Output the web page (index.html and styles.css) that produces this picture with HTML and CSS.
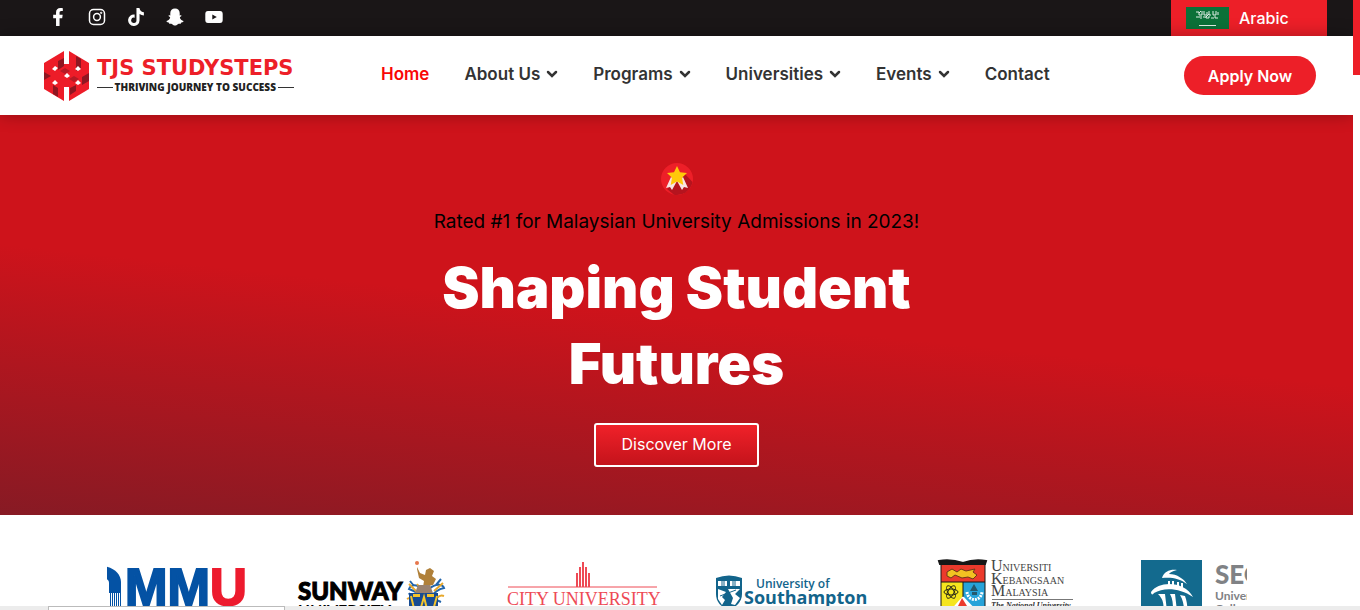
FILE: index.html
```html
<!DOCTYPE html>
<html lang="en">
    <head>
        <meta charset="UTF-8" />
        <meta name="viewport" content="width=device-width, initial-scale=1.0" />
        <title>TJS StudySteps</title>
        <link rel="stylesheet" href="styles.css">
    </head>
    <body>
        <div class="page">
            <!-- Top bar -->
            <div class="topbar">
                <div class="social">
                    <a href="#" aria-label="Facebook">
                        <svg viewBox="0 0 320 512"><path d="M279 288l14-93h-89v-60c0-25 12-50 52-50h41V7s-37-7-72-7c-73 0-121 44-121 125v70H23v93h81v224h100V288z" /></svg>
                    </a>
                    <a href="#" aria-label="Instagram">
                        <svg viewBox="0 0 18 18" class="outline"><rect x="1.5" y="1.5" width="15" height="15" rx="4" /><circle cx="9" cy="9" r="3.400" /><circle cx="13.200" cy="4.800" r=".4" /></svg>
                    </a>
                    <a href="#" aria-label="TikTok">
                        <svg viewBox="0 0 448 512"><path d="M448 210a210 210 0 0 1-123-39v179A163 163 0 1 1 185 188v90a75 75 0 1 0 52 71V0h88a121 121 0 0 0 2 22 122 122 0 0 0 54 80 121 121 0 0 0 67 20z" /></svg>
                    </a>
                    <a href="#" aria-label="Snapchat">
                        <svg viewBox="0 0 18 18"><path d="M9 .5c2.900 0 4.700 2 4.700 4.600v2.300c.8.100 1.600-.4 1.700.4.100.7-1.300 1-1.600 1.600.5 2 1.800 3 3.700 3.500.2 1.100-1.300 1.300-2.300 1.600-.3.400 0 1.200-.7 1.200-1-.1-1.900-.1-2.700.5-.9.700-1.700 1.300-2.800 1.300s-1.900-.6-2.800-1.300c-.8-.6-1.700-.6-2.700-.5-.7 0-.4-.8-.7-1.200-1-.3-2.500-.5-2.300-1.600 1.900-.5 3.200-1.500 3.700-3.500-.3-.6-1.700-.9-1.600-1.600.1-.8.900-.3 1.700-.4V5.100C4.300 2.500 6.100.5 9 .5z" /></svg>
                    </a>
                    <a href="#" aria-label="YouTube">
                        <svg viewBox="0 0 18 18"><path fill-rule="evenodd" d="M3 3h12q2.700 0 2.700 3v6q0 3-2.700 3H3Q.3 15 .3 12V6q0-3 2.700-3zm4.300 3.400v5.200L11.800 9z" /></svg>
                    </a>
                </div>
                <a href="#" class="language">
                    <svg class="flag" viewBox="0 0 43 22">
                        <rect width="43" height="22" fill="#0b7138" stroke="none" />
                        <path d="M10 5h3v3h3V4m2 0v4h3V5m2-1v4h2m2-4v4h3V4m2 1v3M10 10h4m1-1v3m2-2h3v1h3V9m2 2h3m1-2v2h3M13 6l2-2m5 6 3-3" />
                        <path d="M13 18.500h17" />
                    </svg>
                    <span>Arabic</span>
                </a>
            </div>

            <!-- Header -->
            <header class="header">
                <a href="#" class="brand">
                    <svg class="brand-mark" viewBox="0 0 46 50">
                        <path fill="#ed1c28" d="M0 12 20 0v50L0 38zM25 0l20 12v26L25 50z" />
                        <path fill="#ed1c28" d="M18 13h9v23h-9z" />
                        <path fill="#8f1722" d="m14 10 6-3v8l-6 4zM32 5l5 3v9l-5 3zM0 21l7 4-7 4zM9 34l5 3v9l-5-3zM26 37l6-3v6l-6 4zM38 26l7-4v8l-7 4z" />
                        <path fill="#b51a25" d="m16 20 5-3 5 3-5 3zM25 28l5-3 5 3-5 3z" />
                        <path fill="#fff" d="m11 15 3 2-3 3-3-2zM34 15l3 3-3 2-3-2zM23 22l3 3-3 2-3-2zM11 29l3 3-3 2-3-2zM34 29l3 3-3 2-3-2z" />
                    </svg>
                    <span class="brand-text">
                        <span class="brand-name">TJS STUDYSTEPS</span>
                        <span class="brand-tagline">THRIVING JOURNEY TO SUCCESS</span>
                    </span>
                </a>
                <nav class="nav">
                    <a href="#" class="active">Home</a>
                    <a href="#">About Us <svg class="chevron" viewBox="0 0 12 8"><path d="m2 2 4 4 4-4" /></svg></a>
                    <a href="#">Programs <svg class="chevron" viewBox="0 0 12 8"><path d="m2 2 4 4 4-4" /></svg></a>
                    <a href="#">Universities <svg class="chevron" viewBox="0 0 12 8"><path d="m2 2 4 4 4-4" /></svg></a>
                    <a href="#">Events <svg class="chevron" viewBox="0 0 12 8"><path d="m2 2 4 4 4-4" /></svg></a>
                    <a href="#">Contact</a>
                </nav>
                <button class="apply">Apply Now</button>
            </header>

            <!-- Hero -->
            <section class="hero">
                <svg class="badge" viewBox="0 0 32 32">
                    <circle cx="16" cy="16" r="16" fill="#ed1f28" />
                    <path fill="#b5141e" d="m23 10 8.500 9A16 16 0 0 1 13 31.700L6 26z" />
                    <path fill="#f8e4e2" d="m10 14 6 4-5 9-2-3-4 1zM22 14l-6 4 5 9 2-3 4 1z" />
                    <path fill="#ffc90a" d="m16 3 3 6.200 7 .8-5 4.800 1.300 7.200-6.300-3.500L9.700 22l1.300-7.200L6 10l7-.8z" />
                </svg>
                <p class="rated">Rated #1 for Malaysian University Admissions in 2023!</p>
                <h1>Shaping Student Futures</h1>
                <button class="discover">Discover More</button>
            </section>

            <!-- University logos -->
            <section class="partners">
                <div class="track">
                    <svg class="logo" viewBox="0 0 170 70">
                        <path fill="#0452a4" d="M24 11c13 0 21 8 21 16v11H33V28c0-4-3-5-9-5z" />
                        <path stroke="#0452a4" d="M34.500 38v20m2-20v20m2-20v20m2-20v20m2-20v20m2-20v20" />
                        <text x="49" y="50" class="mmu">MM<tspan class="mmu-u">U</tspan></text>
                    </svg>
                    <svg class="logo" viewBox="0 0 170 70">
                        <text x="11" y="45" class="sunway">SUNWAY</text>
                        <text x="11" y="61" class="sunway-sub">UNIVERSITY</text>
                        <g fill="none" stroke-width="2">
                            <path stroke="#2265ac" d="M137 34c-8-5-13-5-15 0 5 2 9 3 12 8m8-8c8-7 14-4 15-1-5 1-9 3-13 9m-18 4-4-8m25 6 7 3M123 26l4 5m27-7-5 6" />
                            <path stroke="#e7a82c" d="m122 29 9 9m-11 6c5-3 7 1 8 6m28-22-9 8m10 5c-6-2-9 4-9 8m-18-20 4 5" />
                        </g>
                        <path fill="#b08039" d="m130 12 3 6 5 2 1-5 4-2 4 3-2 5 4 3-3 6-10 2 1-6-5-3-2-9z" />
                        <circle cx="130" cy="8" r="2" fill="#e7774c" />
                        <path fill="#99816f" d="M131 30h12l3 8-9 3-9-3z" />
                        <path fill="#174b92" d="M122 38h29v12c0 11-7 16-15 18-8-2-14-7-14-18z" />
                        <path fill="none" stroke="#f5c42b" stroke-width="2" d="m124 41 6 25 7-24 6 24 7-25" />
                        <path fill="#f5c42b" d="M126 39h7v3h-7zM140 39h7v3h-7z" />
                    </svg>
                    <svg class="logo" viewBox="0 0 170 70">
                        <path stroke="#ee4a55" stroke-width="2" d="M79 32V18m3 14V12m3 20V7m3 25V12m3 20V18" />
                        <path stroke="#ee4a55" d="M10 32h149" />
                        <text x="9" y="50" class="city">CITY UNIVERSITY</text>
                    </svg>
                    <svg class="logo" viewBox="0 0 170 70">
                        <path fill="#12648b" d="M7 23q13-5 26 0v16c0 8-6 13-13 16C12 52 7 47 7 39z" />
                        <path fill="#fff" d="M9 26h9v5H9zM21 26h10v5H21zM9 34l8 3-4 5 3 3-3 5-4-6zM19 34h12l-5 5 5 4-5 7-4-1 2-6z" />
                        <path fill="none" stroke="#12648b" d="M13 25v6m2-6v6m9-6v6m2-6v6M11 41l16-6" />
                        <text x="47" y="33" class="south-top">University of</text>
                        <text x="35" y="49" class="south">Southampton</text>
                    </svg>
                    <svg class="logo" viewBox="0 0 170 70">
                        <path fill="#eb3a2c" d="M21 9h44v19H21z" />
                        <path fill="#f5e51e" d="M21 27h23v31H21z" />
                        <path fill="#27a3d9" d="M43 27h22v31H43z" />
                        <path fill="#fff" d="m43 41 16 17H28z" />
                        <path fill="#eb3a2c" d="m42 43 5 8h-9z" />
                        <path fill="none" stroke="#171717" d="M21 9v49M65 9v49M43 27v15M21 27h44" />
                        <path stroke="#171717" stroke-width="2" fill="#171717" d="M19 6q12-2 24 2 11-4 23-2l-1 3H20z" />
                        <path fill="#f2c122" stroke="#6d391a" d="m27 17 5-3 5 3 4-3 5 2 9-2-2 3 4 3-4 4-5-2-6 1-7-3-4 3-4-2z" />
                        <g fill="none" stroke="#2a2a18">
                            <ellipse cx="31" cy="37" rx="7" ry="3" />
                            <ellipse cx="31" cy="37" rx="7" ry="3" transform="rotate(60 31 37)" />
                            <ellipse cx="31" cy="37" rx="7" ry="3" transform="rotate(120 31 37)" />
                        </g>
                        <path fill="none" stroke="#fff" stroke-width="3" stroke-dasharray="2 1" d="M47 37c1 10 14 10 15 0" />
                        <path fill="#24586d" d="m54 29 4 7h-8zM52 37h5v3h-5z" />
                        <text x="71" y="16" class="ukm"><tspan class="ukm-cap">U</tspan>NIVERSITI</text>
                        <text x="71" y="29" class="ukm"><tspan class="ukm-cap">K</tspan>EBANGSAAN</text>
                        <text x="71" y="41" class="ukm"><tspan class="ukm-cap">M</tspan>ALAYSIA</text>
                        <path stroke="#777" d="M72 44.500h81" />
                        <text x="71" y="53" class="ukm-sub">The National University</text>
                    </svg>
                    <svg class="logo" viewBox="0 0 170 70">
                        <path fill="#136a8e" d="M10 5h61v60H10z" />
                        <path fill="#fff" d="M31 23c2-7 9-9 15-8-5 1-7 3-8 4 8 0 15 5 18 10-8-6-16-7-25-6zM20 37c8-12 34-11 42 5-13-9-29-10-39-4-1 2-3 2-3-1zM27 39h7l2 17h-4c1-5 1-11-5-17zM39 39h5l2 17h-4c0-6 0-12-3-17zM49 40l5 1c2 5 2 9 3 15h-4c0-6-1-11-4-16z" />
                        <path stroke="#fff" stroke-width="2" d="M38 26v6m4-6v6m5-5v5m4-4v5" />
                        <text x="84" y="29" class="seg">SEGi</text>
                        <text x="84" y="45" class="seg-sub">University</text>
                        <text x="84" y="58" class="seg-sub">Colleges</text>
                    </svg>
                </div>
            </section>
        </div>

        <div class="scrollbar"><div class="scrollbar-thumb"></div></div>
        <div class="statusbar"><div class="status-panel"></div></div>
    </body>
</html>
```
FILE: styles.css
```css
* {
    box-sizing: border-box;
}
body {
    margin: 0;
    height: 100vh;
    overflow: hidden;
    background: #fff;
    color: #333;
    font-family: Inter, "Liberation Sans", sans-serif;
    font-size: 16px;
}
a {
    color: inherit;
    text-decoration: none;
}
button {
    font-family: inherit;
    cursor: pointer;
}
.page {
    margin-right: 7px;
}

/* top bar */
.topbar {
    display: flex;
    justify-content: space-between;
    height: 36px;
    padding: 0 26px 2px 49px;
    background: #1a1617;
    color: #fff;
}
.social {
    display: flex;
    align-items: center;
    gap: 21px;
}
.social a,
.social svg {
    display: block;
    width: 18px;
    height: 18px;
}
.social svg {
    fill: #fff;
}
.social .outline {
    fill: none;
    stroke: #fff;
    stroke-width: 1.5;
}
.language {
    display: flex;
    align-items: center;
    gap: 10px;
    width: 156px;
    height: 36px;
    padding-left: 15px;
    background: #ed1f28;
    font-weight: 500;
}
.flag {
    width: 43px;
    height: 22px;
    fill: none;
    stroke: #e2efe6;
}

/* header */
.header {
    position: relative;
    display: flex;
    align-items: center;
    height: 79px;
    padding: 0 37px 0 44px;
    background: #fff;
    box-shadow: 0 0 16px rgba(0, 0, 0, 0.3);
}
.brand {
    display: flex;
    align-items: center;
    gap: 7px;
    width: 337px;
}
.brand-mark {
    width: 46px;
    height: 50px;
}
.brand-text {
    display: flex;
    flex-direction: column;
    gap: 3px;
    white-space: nowrap;
}
.brand-name {
    color: #ed1f28;
    font: 700 21px/20px "DejaVu Sans", sans-serif;
}
.brand-tagline {
    display: flex;
    align-items: center;
    gap: 2px;
    color: #222;
    font: 800 10px/12px "Open Sans", sans-serif;
}
.brand-tagline::before,
.brand-tagline::after {
    content: "";
    flex: 1;
    height: 1px;
    background: #333;
}
.nav {
    display: flex;
    gap: 35px;
    padding-bottom: 3px;
    font-size: 17px;
    font-weight: 600;
    line-height: 24px;
    white-space: nowrap;
}
.nav a {
    display: flex;
    align-items: center;
    gap: 6px;
}
.nav .active {
    color: #f90606;
}
.chevron {
    width: 12px;
    height: 8px;
    fill: none;
    stroke: #333;
    stroke-width: 2.5;
    stroke-linecap: round;
}
.apply {
    width: 132px;
    height: 39px;
    margin-left: auto;
    padding: 0;
    border: 0;
    border-radius: 20px;
    background: #ed1f28;
    color: #fff;
    font-size: 16px;
    font-weight: 600;
}

/* hero */
.hero {
    display: flex;
    flex-direction: column;
    align-items: center;
    padding: 48px 20px;
    background: linear-gradient(186deg, #ce131b 50%, #871a24 100%);
    text-align: center;
}
.badge {
    width: 32px;
    height: 32px;
}
.rated {
    margin: 13px 0 15px;
    color: #000;
    font-size: 19px;
    line-height: 27px;
}
h1 {
    max-width: 520px;
    margin: 0 0 21px;
    color: #fff;
    font-size: 56px;
    font-weight: 900;
    line-height: 76px;
}
.discover {
    width: 165px;
    height: 44px;
    padding: 0 0 2px;
    border: 2px solid #fff;
    border-radius: 3px;
    background: linear-gradient(#f02129, #c4131b);
    color: #fff;
    font-size: 16px;
}

/* logos */
.partners {
    max-width: 1140px;
    margin: 40px auto 0;
    overflow: hidden;
}
.track {
    display: flex;
    gap: 41px;
    margin-left: -31px;
}
.logo {
    flex: none;
    width: 170px;
    height: 70px;
}
.mmu {
    fill: #0452a4;
    stroke: #0452a4;
    stroke-width: 2;
    font: 700 51px "Liberation Sans", sans-serif;
}
.mmu-u {
    fill: #ed1b2e;
    stroke: #ed1b2e;
}
.sunway {
    fill: #000;
    stroke: #000;
    font: 900 24px Lato, sans-serif;
}
.sunway-sub {
    fill: #000;
    font: 700 16px Lato, sans-serif;
}
.city {
    fill: #ee4a55;
    font: 18px "Liberation Serif", serif;
}
.south-top {
    fill: #12648b;
    font: 600 12px "Open Sans", sans-serif;
}
.south {
    fill: #12648b;
    font: 700 18px "Open Sans", sans-serif;
}
.ukm {
    fill: #444;
    font: 10px "Liberation Serif", serif;
}
.ukm-cap {
    font-size: 16px;
}
.ukm-sub {
    fill: #333;
    font: italic 700 8px "Liberation Serif", serif;
}
.seg {
    fill: #808285;
    font: 900 26px Lato, sans-serif;
}
.seg-sub {
    fill: #808285;
    font: 700 12px Lato, sans-serif;
}

/* browser parts over the page */
.scrollbar {
    position: fixed;
    top: 0;
    right: 0;
    bottom: 0;
    width: 7px;
    background: #fff;
}
.scrollbar-thumb {
    height: 75px;
    background: #ed1f28;
}
.statusbar {
    position: fixed;
    bottom: 0;
    left: 0;
    right: 0;
    height: 4px;
    padding-left: 48px;
    background: #ececec;
}
.status-panel {
    width: 237px;
    height: 4px;
    border: 1px solid #bbb;
    border-bottom: 0;
    background: #fff;
}
```
